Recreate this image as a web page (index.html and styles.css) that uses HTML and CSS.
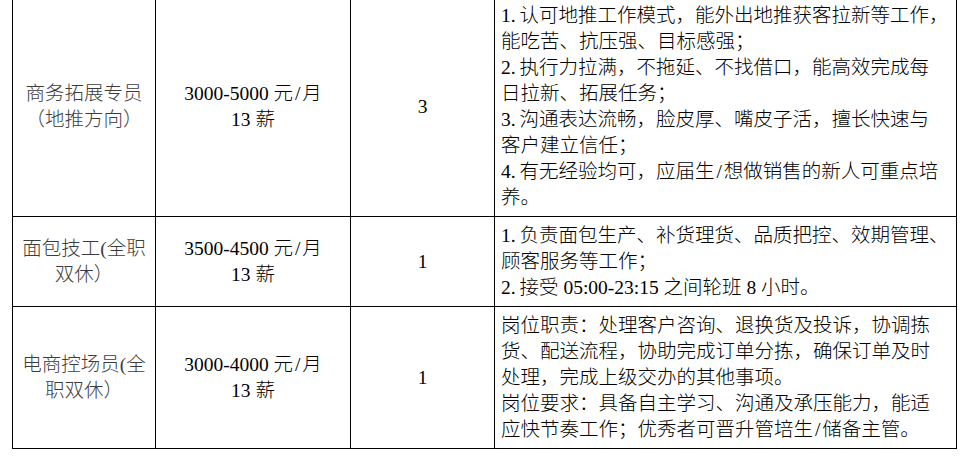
FILE: index.html
```html
<!DOCTYPE html>
<html lang="zh-CN">
<head>
<meta charset="utf-8">
<title>岗位</title>
<link rel="stylesheet" href="styles.css">
</head>
<body>
<table class="jobs">
  <colgroup>
    <col class="c-name">
    <col class="c-pay">
    <col class="c-num">
    <col class="c-desc">
  </colgroup>
  <tr class="first">
    <td class="name">商务拓展专员<br>（地推方向）</td>
    <td class="pay">3000-5000 元<span class="sl">/</span>月<br>13 薪</td>
    <td class="num">3</td>
    <td class="desc"><span class="mk">1.</span>认可地推工作模式，能外出地推获客拉新等工作，<br>能吃苦、抗压强、目标感强；<br><span class="mk">2.</span>执行力拉满，不拖延、不找借口，能高效完成每<br>日拉新、拓展任务；<br><span class="mk">3.</span>沟通表达流畅，脸皮厚、嘴皮子活，擅长快速与<br>客户建立信任；<br><span class="mk">4.</span>有无经验均可，应届生<span class="sl">/</span>想做销售的新人可重点培<br>养。</td>
  </tr>
  <tr>
    <td class="name">面包技工(全职<br>双休）</td>
    <td class="pay">3500-4500 元<span class="sl">/</span>月<br>13 薪</td>
    <td class="num">1</td>
    <td class="desc"><span class="mk">1.</span>负责面包生产、补货理货、品质把控、效期管理、<br>顾客服务等工作；<br><span class="mk">2.</span>接受 05:00-23:15 之间轮班 8 小时。</td>
  </tr>
  <tr>
    <td class="name">电商控场员(全<br>职双休）</td>
    <td class="pay">3000-4000 元<span class="sl">/</span>月<br>13 薪</td>
    <td class="num">1</td>
    <td class="desc">岗位职责：处理客户咨询、退换货及投诉，协调拣<br>货、配送流程，协助完成订单分拣，确保订单及时<br>处理，完成上级交办的其他事项。<br>岗位要求：具备自主学习、沟通及承压能力，能适<br>应快节奏工作；优秀者可晋升管培生<span class="sl">/</span>储备主管。</td>
  </tr>
</table>
</body>
</html>
```
FILE: styles.css
```css
html, body {
  margin: 0;
  padding: 0;
  background: #ffffff;
}

body {
  font-family: "Liberation Serif", "Noto Sans CJK SC", serif;
  font-size: 19.5px;
  line-height: 26px;
  color: #000000;
}

.jobs {
  margin-left: 12px;
  border-collapse: collapse;
  table-layout: fixed;
  width: 944px;
}

.c-name { width: 143px; }
.c-pay { width: 195px; }
.c-num { width: 144px; }
.c-desc { width: 462px; }

.jobs td {
  border: 1px solid #000000;
  padding: 6px 6px 5px;
  vertical-align: middle;
  white-space: nowrap;
  font-weight: 300;
}

.jobs .first td {
  border-top: none;
  padding-top: 3px;
  padding-bottom: 5px;
}

.name {
  text-align: center;
  color: #3c3c3c;
}

.pay,
.num {
  text-align: center;
}

.desc {
  text-align: left;
}

.mk {
  padding-right: 0.2em;
}

.sl {
  padding: 0 0.1em;
}
```
